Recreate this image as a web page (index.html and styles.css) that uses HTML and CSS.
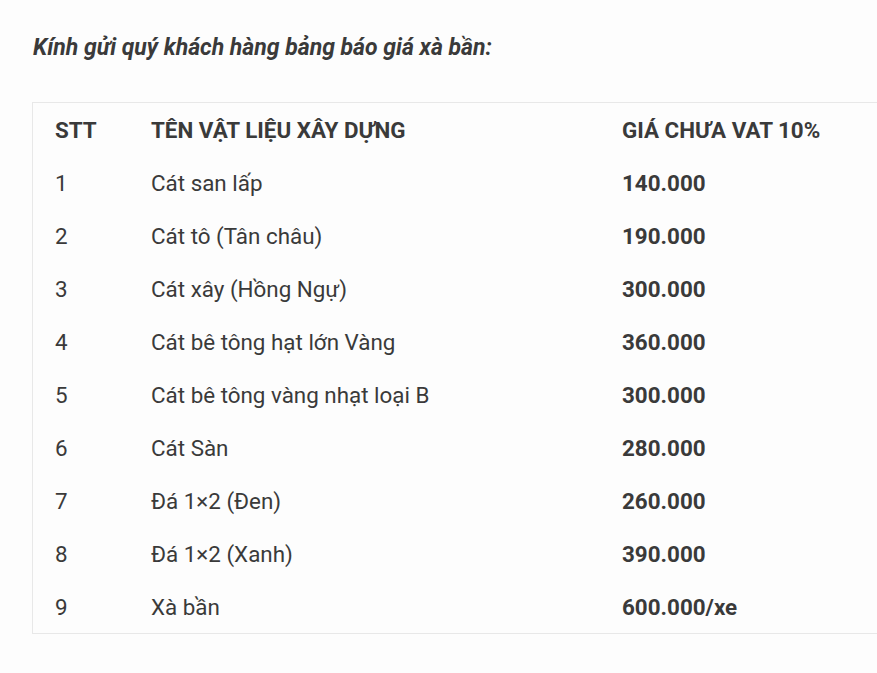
FILE: index.html
```html
<!DOCTYPE html>
<html lang="vi">
<head>
<meta charset="utf-8">
<title>Báo giá xà bần</title>
<link rel="stylesheet" href="styles.css">
</head>
<body>
<div class="page">
  <h2 class="intro">Kính gửi quý khách hàng bảng báo giá xà bần:</h2>
  <div class="table-wrap">
    <table class="price-table">
      <thead>
        <tr><th class="c-stt">STT</th><th class="c-name">TÊN VẬT LIỆU XÂY DỰNG</th><th class="c-price">GIÁ CHƯA VAT 10%</th></tr>
      </thead>
      <tbody>
        <tr><td>1</td><td>Cát san lấp</td><td class="price">140.000</td></tr>
        <tr><td>2</td><td>Cát tô (Tân châu)</td><td class="price">190.000</td></tr>
        <tr><td>3</td><td>Cát xây (Hồng Ngự)</td><td class="price">300.000</td></tr>
        <tr><td>4</td><td>Cát bê tông hạt lớn Vàng</td><td class="price">360.000</td></tr>
        <tr><td>5</td><td>Cát bê tông vàng nhạt loại B</td><td class="price">300.000</td></tr>
        <tr><td>6</td><td>Cát Sàn</td><td class="price">280.000</td></tr>
        <tr><td>7</td><td>Đá 1×2 (Đen)</td><td class="price">260.000</td></tr>
        <tr><td>8</td><td>Đá 1×2 (Xanh)</td><td class="price">390.000</td></tr>
        <tr><td>9</td><td>Xà bần</td><td class="price">600.000/xe</td></tr>
      </tbody>
    </table>
  </div>
</div>
</body>
</html>
```
FILE: styles.css
```css
html, body {
  margin: 0;
  padding: 0;
  background: #fdfdfd;
  overflow: hidden;
}
body {
  font-family: Roboto, "Liberation Sans", sans-serif;
  color: #3a3a3a;
}
.page {
  padding: 32px 0 0 32px;
}
.intro {
  margin: 0 0 38px 1px;
  font-size: 23px;
  font-weight: 700;
  font-style: italic;
  line-height: 32px;
  color: #3a3a3a;
}
.table-wrap {
  width: 845px;
  overflow: hidden;
}
.price-table {
  width: 900px;
  border-collapse: collapse;
  border: 1px solid #e8e8e8;
  font-size: 22.4px;
}
.price-table th, .price-table td {
  text-align: left;
  padding: 0 24px 0 22px;
  height: 53px;
  line-height: 26px;
  vertical-align: middle;
}
.price-table th {
  font-weight: 700;
}
.c-stt { width: 50px; }
.c-name { width: 425px; }
.price {
  font-weight: 700;
}
```
